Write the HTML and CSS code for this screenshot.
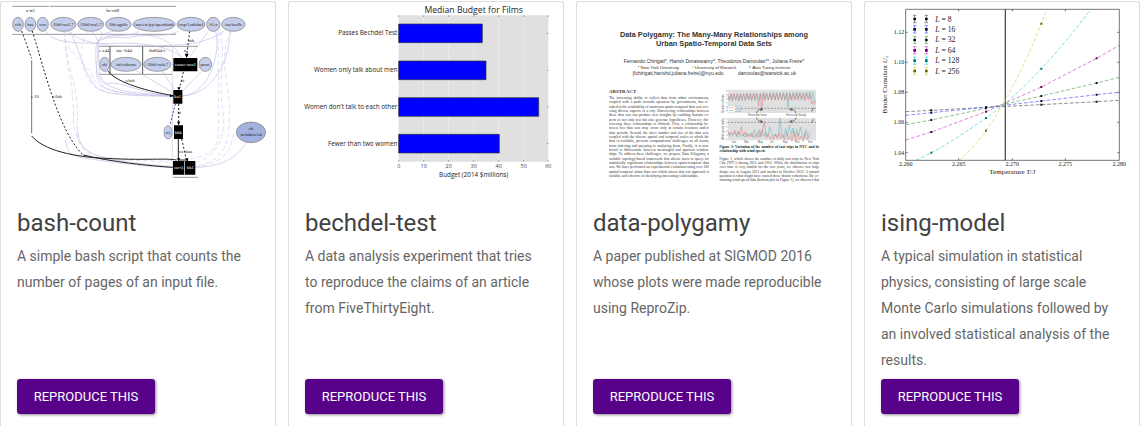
FILE: index.html
```html
<!DOCTYPE html>
<html lang="en">
<head>
<meta charset="utf-8">
<title>Examples</title>
<link rel="stylesheet" href="styles.css">
</head>
<body>
<main class="cards">

<article class="card">
<svg class="thumb graph" viewBox="3 6 822 552" role="img" aria-label="Provenance graph">
  <g class="frame">
    <path d="M37 19H147M150 19H528M37 103H528M297 139H594M297 223H518M520 532H594"/>
    <path d="M330 139V223M428 139V223" class="frame-strong"/>
    <path d="M517 139V532" class="frame-light"/>
  </g>
  <g class="flow">
    <path d="M140 94C160 150 350 120 440 134C500 142 525 155 543 172"/>
    <path d="M205 94C240 130 330 140 400 138C540 135 600 140 672 94"/>
    <path d="M210 94C240 150 255 240 300 270C350 290 440 285 520 289"/>
    <path class="faint" d="M190 94C200 170 270 190 280 235C300 285 420 284 520 290"/>
    <path class="faint" d="M262 94C225 160 250 230 285 262C330 290 430 288 520 289"/>
    <path d="M275 94C320 130 270 210 300 250C320 285 430 282 520 288"/>
    <path d="M340 94C270 105 300 150 298 210C300 280 400 276 520 288"/>
    <path d="M415 94C380 120 290 90 288 140C285 200 290 260 330 250C370 245 420 282 520 287"/>
    <path d="M300 94C320 120 420 90 480 115C510 125 530 150 545 172M410 213L522 280M486 213L525 272M605 213L546 275"/>
    <path d="M535 94C500 115 440 100 400 110C360 120 320 100 290 130"/>
    <path d="M625 94L567 173M647 94C665 170 620 285 547 288M690 94C690 200 620 290 547 287"/>
    <path class="faint" d="M655 94V400C655 480 580 465 545 490M660 94C680 170 650 240 671 350C675 430 640 470 585 490"/>
    <path class="faint" d="M695 94C645 170 700 290 687 350C690 450 660 485 585 498M701 400C690 480 640 492 585 502"/>
    <path d="M739 427C710 480 650 502 585 502"/>
    <path class="faint" d="M193 94C200 220 240 260 232 370C230 440 260 470 330 474C430 480 500 475 550 488"/>
    <path class="faint" d="M197 94C190 180 225 250 220 360C230 450 270 480 330 480C430 480 500 485 555 490"/>
    <path d="M196 420C205 450 200 470 260 475C350 490 450 500 520 503M232 390C240 460 270 480 520 500"/>
    <path d="M526 312L510 374" class="flow-strong"/>
  </g>
  <g class="edge">
    <path d="M95 181V400" class="thin"/>
    <path d="M95 408C130 450 220 473 340 476C430 481 500 474 530 480"/>
    <path d="M65 93L95 175M97 93L120 170C160 310 200 420 250 465" class="dash"/>
    <path d="M250 465C330 485 450 498 518 502M323 212C350 250 450 275 520 287"/>
    <path d="M569 94L560 168M550 216L538 267M536 312V374M545 417L560 482" class="dash"/>
    <path d="M535 417V480M538 480H560"/>
  </g>
  <path class="arrows" d="M554 161h12l-6 13zM532 262h10l-6 9zM531 365h10l-5 10zM531 475h10l-5 10zM555 475h10l-2 10zM510 283l12 5l-12 4z"/>
  <g class="node">
    <ellipse cx="54" cy="73" rx="16" ry="21"/><ellipse cx="91" cy="73" rx="16" ry="21"/><ellipse cx="128" cy="73" rx="17" ry="21"/>
    <ellipse cx="190" cy="73" rx="38" ry="21"/><ellipse cx="272" cy="73" rx="39" ry="21"/><ellipse cx="355" cy="73" rx="38" ry="21"/>
    <ellipse cx="462" cy="73" rx="63" ry="21"/><ellipse cx="573" cy="73" rx="42" ry="21"/><ellipse cx="640" cy="73" rx="20" ry="21"/><ellipse cx="700" cy="73" rx="35" ry="21"/>
    <ellipse cx="314" cy="193" rx="15" ry="21"/><ellipse cx="378" cy="193" rx="45" ry="21"/><ellipse cx="472" cy="193" rx="41" ry="21"/><ellipse cx="616" cy="193" rx="19" ry="21"/>
    <ellipse cx="504" cy="397" rx="12" ry="20"/><ellipse cx="753" cy="397" rx="44" ry="31" class="node-dark"/>
  </g>
  <g class="process"><path d="M520 174h72v40h-72zM520 270h27v41h-27zM522 376h27v41h-27zM519 483h34v41h-34zM555 483h31v41h-31z"/></g>
  <g class="names">
    <text x="91" y="35">a-tt3</text><text x="338" y="35">bc-cd8</text>
    <text x="54" y="78">cfb</text><text x="91" y="78">bas</text><text x="128" y="78">con</text>
    <text x="190" y="78">/lib0-uu1.7</text><text x="272" y="78">//lib0-uu1.7</text><text x="355" y="78">/lib/ogu0c</text><text x="462" y="78">/usr/etc/py/opendoub</text><text x="573" y="78">/usp/1odobu1</text><text x="640" y="78">/f1.u</text><text x="700" y="78">/ou/iou9c</text>
    <text x="574" y="126">tab</text><text x="557" y="156">u/</text>
    <text x="313" y="155">e.c44</text><text x="374" y="155">inc.-044-</text><text x="472" y="155">ibd044-c</text>
    <text x="314" y="198">ob/</text><text x="378" y="198">/uf/cobsuse</text><text x="472" y="198">//lib0-oub.7</text><text x="616" y="198">pum/</text>
    <text x="390" y="245">c/tab</text><text x="548" y="245">ct</text><text x="105" y="294">e.10</text><text x="172" y="294">r.0ab</text><text x="538" y="342">bt</text>
    <text x="504" y="402">rt)</text><text x="753" y="391">cb</text><text x="753" y="409">m/tabcte/t4</text><text x="556" y="459">we-kua</text>
  </g>
  <g class="names names-inverse"><text x="556" y="198">cuuse-ous1</text><text x="533" y="294">ka1</text><text x="535" y="401">bbk</text><text x="536" y="507">ou-t)</text><text x="571" y="507">bk1</text></g>
</svg>
<div class="content"><h2 class="name">bash-count</h2>
<p class="about">A simple bash script that counts the number of pages of an input file.</p>
<button class="action" type="button">Reproduce this</button></div>
</article>

<article class="card">
<svg class="thumb bars" viewBox="9 6 822 552" role="img" aria-label="Median budget for films">
  <path class="plot" d="M338 46H787V485H338z"/>
  <path class="gridlines" d="M413 46V485M488 46V485M563 46V485M638 46V485M713 46V485"/>
  <path class="ticks" d="M338 46v5M413 46v5M488 46v5M563 46v5M638 46v5M713 46v5M787 46v5M338 485v-5M413 485v-5M488 485v-5M563 485v-5M638 485v-5M713 485v-5M787 485v-5M787 100h-5M787 211h-5M787 321h-5M787 430h-5"/>
  <path class="bar" d="M338 72H589V128H338zM338 183H600V239H338zM338 293H758V349H338zM338 403H640V459H338z"/>
  <text class="bars-title" x="563" y="38">Median Budget for Films</text>
  <g class="bars-label"><text x="334" y="106">Passes Bechdel Test</text><text x="334" y="216">Women only talk about men</text><text x="334" y="327">Women don't talk to each other</text><text x="334" y="437">Fewer than two women</text></g>
  <g class="bars-tick"><text x="338" y="505">0</text><text x="413" y="505">10</text><text x="488" y="505">20</text><text x="563" y="505">30</text><text x="638" y="505">40</text><text x="713" y="505">50</text><text x="787" y="505">60</text></g>
  <text class="bars-axis" x="563" y="532">Budget (2014 $millions)</text>
</svg>
<div class="content"><h2 class="name">bechdel-test</h2>
<p class="about">A data analysis experiment that tries to reproduce the claims of an article from FiveThirtyEight.</p>
<button class="action" type="button">Reproduce this</button></div>
</article>

<article class="card">
<svg class="thumb paper" viewBox="-69 -54 822 552" role="img" aria-label="First page of the Data Polygamy paper">
  <g class="paper-title"><text x="342" y="51">Data Polygamy: The Many-Many Relationships among</text><text x="342" y="77">Urban Spatio-Temporal Data Sets</text></g>
  <g class="paper-authors"><text x="342" y="129">Fernando Chirigati*, Harish Doraiswamy*, Theodoros Damoulas*°, Juliana Freire*</text><text x="234" y="165">{fchirigati,harishd,juliana.freire}@nyu.edu</text><text x="501" y="165">damoulas@warwick.ac.uk</text></g>
  <g class="paper-places"><text x="175" y="146">* New York University</text><text x="342" y="146">° University of Warwick</text><text x="509" y="146">† Alan Turing Institute</text></g>
  <text class="paper-head" x="27" y="218">ABSTRACT</text>
  <foreignObject x="27" y="227" width="300" height="260">
    <p class="paper-text" xmlns="http://www.w3.org/1999/xhtml">The increasing ability to collect data from urban environments,<br>coupled with a push towards openness by governments, has re-<br>sulted in the availability of numerous spatio-temporal data sets cov-<br>ering diverse aspects of a city. Discovering relationships between<br>these data sets can produce new insights by enabling domain ex-<br>perts to not only test but also generate hypotheses. However, dis-<br>covering these relationships is difficult. First, a relationship be-<br>tween two data sets may occur only at certain locations and/or<br>time periods. Second, the sheer number and size of the data sets,<br>coupled with the diverse spatial and temporal scales at which the<br>data is available, presents computational challenges on all fronts,<br>from indexing and querying to analyzing them. Finally, it is non-<br>trivial to differentiate between meaningful and spurious relation-<br>ships. To address these challenges, we propose Data Polygamy, a<br>scalable topology-based framework that allows users to query for<br>statistically significant relationships between spatio-temporal data<br>sets. We have performed an experimental evaluation using over 300<br>spatial-temporal urban data sets which shows that our approach is<br><span class="loose">scalable and effective at identifying interesting relationships.</span></p>
  </foreignObject>
  <path class="plot" d="M383 209H648V279H383zM383 294H648V361H383z"/>
  <path class="series-b" d="M384 228l4 14 5-20 4 21 5-20 5 19 5-21 5 22 4-20 5 18 5-20 5 21 5-22 5 19 5-20 4 22 6-20 4 20 5-22 6 20 5-20 4 19 6-21 4 20 5-18 5 20 5-20 5 19 5-20 5 21 5-22 5 20 5-19 5 21 5-22 5 20 5-20 4 45 5-43 5 18 5-20 5 21 5-22 5 20 5-19 5 21 5-20 5 20 5-22 5 19 5-20 5 22 5-20 5 25 4 8"/>
  <path class="series-a" d="M384 224l4 16 5-19 4 20 5-21 5 20 5-19 5 20 4-21 5 20 5-19 5 20 5-21 5 20 5-19 4 20 6-21 4 20 5-19 6 38 5-38 4 52 6-52 4 20 5-21 5 20 5-19 5 20 5-21 5 20 5-19 5 20 5-21 5 20 5-19 5 20 5-21 5 20 5-19 5 20 5-21 5 20 5-19 5 20 5-21 5 20 5-19 5 20 5-21 5 20 5-19 5 31 5-10 4 12"/>
  <path class="series-b" d="M384 346l5-8 5 12 6-7 5-9 6 17 6-15 5 14 6-8 6 10 6-13 6 10 6-8 5 10 7-22 5 20 6-15 5 18 6-23 6 20 5-13 6 14 6-31 5 20 6 11 5-8 6 9 5-13 4-44 6 50 5 9 6-28 6 22 5-32 6 29 5-20 6 27 5-24 6 20 5-26 6 22 5 12 6-26 6 24 6-16"/>
  <path class="series-a" d="M384 334l5 12 5-10 5 9 5-15 5 18 5-15 5 10 5-22 6 27 5-13 5 16 6-9 5 8 5-12 6 16 5-8 6 7 5-24 6 20 5-25 4-19 6 49 6-13 5 17 6-8 5 8 5-16 6 14 6-18 5 18 6-12 5 16 6-21 5 20 6-13 5 18 6-31 5 33 6-27 5 20 6-11 5 16 6-25 6 20 6-8"/>
  <path class="limit" d="M383 265H648M383 307H648"/>
  <path class="key" d="M384 257h37v21h-37z"/><path class="series-a" d="M387 263h14"/><path class="series-b" d="M387 272h14"/>
  <path class="pointer" d="M487 268Q469 268 470 281M570 268Q588 268 588 281M470 292Q470 304 487 305M588 292Q588 304 570 305M480 264l8 4-8 4M577 264l-8 4 8 4M480 300l8 5-8 4M577 300l-8 5 8 4M635 275l5-12M635 308l5-10"/>
  <g class="paper-tiny"><text x="404" y="266">2011</text><text x="404" y="275">2012</text><text x="445" y="289">Hurricane Irene</text><text x="559" y="289">Hurricane Sandy</text><text x="395" y="369">Jan</text><text x="433" y="369">Mar</text><text x="473" y="369">May</text><text x="510" y="369">Jul</text><text x="548" y="369">Sep</text><text x="586" y="369">Oct</text><text x="624" y="369">Dec</text><text transform="translate(371 278) rotate(-90)">Number of trips</text><text transform="translate(371 360) rotate(-90)">Wind speed (mph)</text></g>
  <path class="limit-ticks" d="M380 210v68M380 295v66"/>
  <foreignObject x="358" y="374" width="300" height="28"><p class="paper-text paper-caption" xmlns="http://www.w3.org/1999/xhtml">Figure 1: Variation of the number of taxi trips in NYC and its<br><span class="loose">relationship with wind speed.</span></p></foreignObject>
  <foreignObject x="358" y="409" width="300" height="78"><p class="paper-text" xmlns="http://www.w3.org/1999/xhtml">Figure 1, which shows the number of daily taxi trips in New York<br>City (NYC) during 2011 and 2012. While the distribution of trips<br>over time is very similar for the two years, we observe two large<br>drops: one in August 2011 and another in October 2012. A natural<br>question is what might have caused these drastic reductions. By ex-<br>amining wind speed data (bottom plot in Figure 1), we discover that</p></foreignObject>
</svg>
<div class="content"><h2 class="name">data-polygamy</h2>
<p class="about">A paper published at SIGMOD 2016 whose plots were made reproducible using ReproZip.</p>
<button class="action" type="button">Reproduce this</button></div>
</article>

<article class="card">
<svg class="thumb ising" viewBox="21 6 822 552" role="img" aria-label="Binder cumulant by temperature">
  <path class="critical" d="M442 28V481"/>
  <g class="curve">
    <path class="l8" d="M143 335L220 331L384 322L550 314L716 305L784 301"/>
    <path class="l16" d="M143 346L220 338L384 322L550 303L716 284L784 277"/>
    <path class="l32" d="M143 374L220 360L384 325L550 288L716 249L784 232"/>
    <path class="l64" d="M143 420L220 396L384 335L550 261L716 175L784 136"/>
    <path class="l128" d="M175 480Q250 448 384 354Q460 302 550 206Q620 132 698 28"/>
    <path class="l256" d="M304 481Q345 445 384 392Q470 270 550 71L567 28"/>
  </g>
  <path class="marks" d="M217 328h6v6h-6zM217 335h6v6h-6zM217 357h6v6h-6zM217 393h6v6h-6zM381 319h6v6h-6zM381 322h6v6h-6zM547 311h6v6h-6zM547 300h6v6h-6zM547 285h6v6h-6zM713 302h6v6h-6zM713 281h6v6h-6zM713 246h6v6h-6z"/>
  <path class="marks marks-l64" d="M381 332h6v6h-6zM547 258h6v6h-6zM713 172h6v6h-6z"/>
  <path class="marks marks-l128" d="M217 455h6v6h-6zM381 351h6v6h-6zM547 203h6v6h-6z"/>
  <path class="marks marks-l256" d="M381 389h6v6h-6zM547 68h6v6h-6z"/>
  <path class="axes" d="M143 28H784V481H143zM302 481v-6M463 481v-6M622 481v-6M302 28v6M463 28v6M622 28v6M143 97h6M143 187h6M143 277h6M143 367h6M143 458h6M784 97h-6M784 187h-6M784 277h-6M784 367h-6M784 458h-6"/>
  <g class="legend">
    <path class="l8" d="M170 46v22m-5-22h10m-10 22h10M205 46v22m-5-22h10m-10 22h10"/><path class="l16" d="M170 77v22m-5-22h10m-10 22h10M205 77v22m-5-22h10m-10 22h10"/><path class="l32" d="M170 109v22m-5-22h10m-10 22h10M205 109v22m-5-22h10m-10 22h10"/><path class="l64" d="M170 140v22m-5-22h10m-10 22h10M205 140v22m-5-22h10m-10 22h10"/><path class="l128" d="M170 171v22m-5-22h10m-10 22h10M205 171v22m-5-22h10m-10 22h10"/><path class="l256" d="M170 202v22m-5-22h10m-10 22h10M205 202v22m-5-22h10m-10 22h10"/>
  </g>
  <path class="marks" d="M166 53h8v8h-8zM201 53h8v8h-8zM166 84h8v8h-8zM201 84h8v8h-8zM166 116h8v8h-8zM201 116h8v8h-8z"/>
  <path class="marks marks-l64" d="M166 147h8v8h-8zM201 147h8v8h-8z"/><path class="marks marks-l128" d="M166 178h8v8h-8zM201 178h8v8h-8z"/><path class="marks marks-l256" d="M166 209h8v8h-8zM201 209h8v8h-8z"/>
  <g class="key-text"><text x="232" y="65"><tspan class="math">L</tspan> = 8</text><text x="232" y="95"><tspan class="math">L</tspan> = 16</text><text x="232" y="127"><tspan class="math">L</tspan> = 32</text><text x="232" y="158"><tspan class="math">L</tspan> = 64</text><text x="232" y="189"><tspan class="math">L</tspan> = 128</text><text x="232" y="221"><tspan class="math">L</tspan> = 256</text></g>
  <g class="y-ticks"><text x="139" y="103">1.12</text><text x="139" y="193">1.10</text><text x="139" y="283">1.08</text><text x="139" y="373">1.06</text><text x="139" y="464">1.04</text></g>
  <g class="x-ticks"><text x="143" y="499">2.260</text><text x="302" y="499">2.265</text><text x="463" y="499">2.270</text><text x="622" y="499">2.275</text><text x="784" y="499">2.280</text></g>
  <text class="axis-name" x="463" y="523">Temperature <tspan class="math">T/J</tspan></text>
  <text class="axis-name" transform="translate(88 254) rotate(-90)">Binder Cumulant <tspan class="math">U</tspan>₂</text>
</svg>
<div class="content"><h2 class="name">ising-model</h2>
<p class="about">A typical simulation in statistical physics, consisting of large scale Monte Carlo simulations followed by an involved statistical analysis of the results.</p>
<button class="action" type="button">Reproduce this</button></div>
</article>

</main>
</body>
</html>
```
FILE: styles.css
```css
* { box-sizing: border-box; }
body { margin: 0; background: #fff; font-family: Roboto, sans-serif; }

.cards {
  display: grid;
  grid-template-columns: repeat(4, minmax(0, 1fr));
  gap: 12px;
  min-height: 100vh;
  padding: 1px 4px 0 0;
}
.card {
  display: flex;
  flex-direction: column;
  border: 1px solid #ddd;
  border-bottom: 0;
  border-radius: 3px 3px 0 0;
}
.thumb { display: block; width: 100%; height: auto; }
.content {
  display: flex;
  flex: 1;
  flex-direction: column;
  align-items: flex-start;
  padding: 21px 16px 12px;
}
.name { margin: 0 0 4px; color: #424242; font-size: 24px; font-weight: 400; line-height: 32px; }
.about { flex: 1; margin: 0 0 6px; color: #666; font-size: 14px; line-height: 26px; }
.action {
  min-width: 138px;
  height: 35px;
  padding: 0 16px;
  border: 0;
  border-radius: 3px;
  background: #570288;
  box-shadow: 1px 1px 3px rgba(0, 0, 0, .45);
  color: #fff;
  font-family: inherit;
  font-size: 13px;
  text-transform: uppercase;
}

/* provenance graph */
.graph { fill: none; }
.frame { stroke: #999; stroke-width: 3; }
.frame-strong { stroke: #555; }
.frame-light { stroke: #ddd; }
.flow { stroke: #c0c0ea; stroke-width: 2; }
.faint { stroke: #ceceee; stroke-dasharray: 14 8; }
.flow-strong { stroke: #4444b0; stroke-width: 3; stroke-dasharray: 6 5; }
.edge { stroke: #222; stroke-width: 3; }
.thin { stroke: #777; }
.dash { stroke-dasharray: 6 6; }
.arrows { fill: #000; }
.node { fill: #c5cfec; stroke: #777; stroke-width: 2; }
.node-dark { fill: #a3b1df; }
.process { fill: #000; }
.names { fill: #222; font: 14px "Liberation Serif", serif; text-anchor: middle; }
.names-inverse { fill: #fff; }

/* bar chart */
.plot { fill: #e0e0e0; }
.gridlines { stroke: #f3f3f3; stroke-width: 2; }
.ticks { stroke: #777; stroke-width: 2; }
.bar { fill: #00f; stroke: #333; stroke-width: 2; }
.bars { fill: #222; font-family: "Open Sans", sans-serif; }
.bars-title { font-size: 26px; text-anchor: middle; }
.bars-label { font-size: 19px; text-anchor: end; }
.bars-tick { fill: #444; font-size: 16px; text-anchor: middle; }
.bars-axis { font-size: 19px; text-anchor: middle; }

/* paper page */
.paper { fill: #333; font-family: "Liberation Sans", sans-serif; }
.paper-title { font-size: 22px; font-weight: 700; text-anchor: middle; }
.paper-authors { font-size: 15px; text-anchor: middle; }
.paper-places { font-size: 13px; text-anchor: middle; }
.paper-head { font: 700 15px "Liberation Serif", serif; }
.paper-text {
  margin: 0;
  color: #333;
  font: 11px/13px "Liberation Serif", serif;
  text-align: justify;
  text-align-last: justify;
  white-space: nowrap;
}
.paper-caption { color: #222; font-weight: 700; }
.loose { display: block; text-align-last: left; }
.paper-tiny { fill: #555; font-size: 8px; }
.series-a, .series-b, .pointer, .limit, .limit-ticks { fill: none; stroke-width: 2; }
.series-a { stroke: #e07878; stroke-opacity: .8; }
.series-b { stroke: #62bcc2; stroke-opacity: .85; }
.limit { stroke: #777; stroke-dasharray: 6 4; }
.limit-ticks { stroke: #888; stroke-dasharray: 4 8; }
.pointer { stroke: #444; }
.key { fill: #fff; stroke: #bbb; }

/* Ising plot */
.ising { fill: #222; font-family: "Liberation Serif", serif; }
.critical { stroke: #555; stroke-width: 4; }
.curve { fill: none; stroke-width: 2; stroke-dasharray: 11 6; }
.legend { fill: none; stroke-width: 2; }
.l8 { stroke: #555; }
.l16 { stroke: #55f; }
.l32 { stroke: #50a550; }
.l64 { stroke: #d045d0; }
.l128 { stroke: #35d0d0; }
.l256 { stroke: #d5d045; }
.marks { fill: #112; }
.marks-l64 { fill: #606; }
.marks-l128 { fill: #077; }
.marks-l256 { fill: #660; }
.axes { fill: none; stroke: #333; stroke-width: 2; }
.key-text { font-size: 23px; }
.x-ticks, .y-ticks { font-size: 18px; }
.x-ticks { text-anchor: middle; }
.y-ticks { text-anchor: end; }
.axis-name { font-size: 21px; text-anchor: middle; }
.math { font-style: italic; }
```
